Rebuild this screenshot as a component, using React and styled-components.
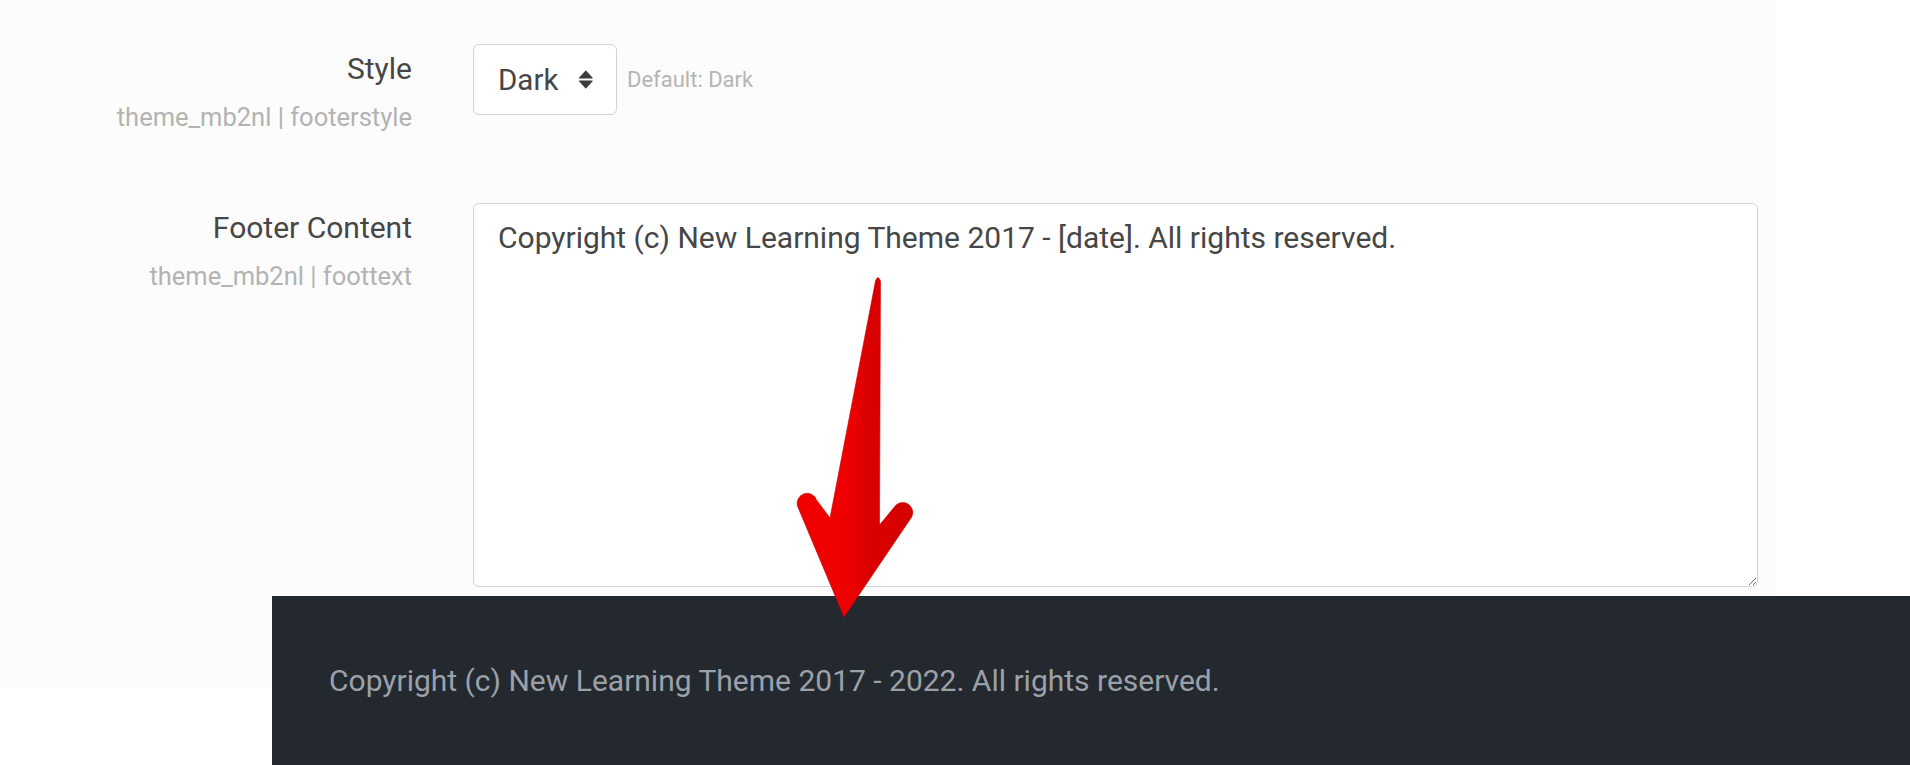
import React from "react";
import styled, { createGlobalStyle } from "styled-components";

const GlobalStyle = createGlobalStyle`
  html, body {
    margin: 0;
    padding: 0;
    background: #ffffff;
  }
  body {
    font-family: Roboto, "Noto Sans", "Liberation Sans", sans-serif;
  }
  * { box-sizing: border-box; }
`;

const Page = styled.div`
  position: relative;
  width: 1910px;
  height: 765px;
  overflow: hidden;
  background: #ffffff;
`;

const Top = styled.div`
  display: flex;
`;

const Panel = styled.section`
  width: 1776px;
  height: 596px;
  background: #fcfcfc;
  padding-top: 44px;
  display: flex;
  flex-direction: column;
  gap: 71px;
`;

const SettingRow = styled.div`
  display: grid;
  grid-template-columns: 412px 1fr;
  column-gap: 61px;
  align-items: start;
`;

const LabelCol = styled.div`
  text-align: right;
  padding-top: 8px;
`;

const Label = styled.div`
  font-size: 30px;
  line-height: 34px;
  color: #464646;
`;

const SubLabel = styled.div`
  margin-top: 16px;
  font-size: 25.5px;
  line-height: 30px;
  color: #b3b3b3;
`;

const ControlCol = styled.div`
  display: flex;
  align-items: center;
`;

const SelectBox = styled.div`
  display: flex;
  align-items: center;
  gap: 20px;
  height: 71px;
  width: 144px;
  padding: 0 22px 0 24px;
  border: 1px solid #d3d3d3;
  border-radius: 6px;
  background: #ffffff;
  font-size: 29.5px;
  line-height: 34px;
  color: #464646;
`;

const DefaultNote = styled.span`
  margin-left: 10px;
  font-size: 22px;
  line-height: 26px;
  color: #b5b5b5;
`;

const TextArea = styled.textarea`
  display: block;
  width: 1285px;
  height: 384px;
  margin: 0;
  padding: 11px 24px 9px;
  border: 1px solid #d3d3d3;
  border-radius: 6px;
  background: #ffffff;
  font-family: Roboto, "Noto Sans", "Liberation Sans", sans-serif;
  font-size: 30px;
  line-height: 1.5;
  color: #464646;
  resize: both;
  outline: none;
`;

const Bottom = styled.div`
  display: flex;
  align-items: flex-start;
`;

const Strip = styled.div`
  width: 272px;
  height: 92px;
  background: #fcfcfc;
`;

const Footer = styled.footer`
  flex: 1;
  height: 169px;
  background: #242930;
  display: flex;
  align-items: center;
  padding-left: 57px;
  font-size: 30px;
  line-height: 34px;
  color: #9ba1a9;
`;

const ArrowLayer = styled.svg`
  position: absolute;
  left: 790px;
  top: 270px;
  width: 130px;
  height: 360px;
  pointer-events: none;
`;

const SortIcon = () => (
  <svg width="16" height="19" viewBox="0 0 16 19" aria-hidden="true">
    <path d="M1.5 8 L8 1 L14.5 8 Z" fill="#3c3c3c" stroke="#3c3c3c" strokeWidth="1.2" strokeLinejoin="round" />
    <path d="M1.5 11 L14.5 11 L8 18 Z" fill="#3c3c3c" stroke="#3c3c3c" strokeWidth="1.2" strokeLinejoin="round" />
  </svg>
);

const RedArrow = () => (
  <ArrowLayer viewBox="0 0 130 360" aria-hidden="true">
    <defs>
      <linearGradient id="arrowFill" x1="0" y1="0" x2="1" y2="0">
        <stop offset="0%" stopColor="#f20000" />
        <stop offset="45%" stopColor="#ef0000" />
        <stop offset="60%" stopColor="#dc0000" />
        <stop offset="100%" stopColor="#d40000" />
      </linearGradient>
    </defs>
    <path
      d="M85.5 11 Q88 4 90.5 11 L89.5 255 L104.3 237.1 A10 10 0 0 1 121.7 246.9 L54 347 L7.5 236.1 A10 10 0 0 1 26.5 229.9 L40 248 Z"
      fill="url(#arrowFill)"
      stroke="#c80000"
      strokeWidth="0.6"
      strokeLinejoin="round"
    />
  </ArrowLayer>
);

export default function App() {
  return (
    <Page>
      <GlobalStyle />
      <Top>
        <Panel>
          <SettingRow>
            <LabelCol>
              <Label>Style</Label>
              <SubLabel>theme_mb2nl | footerstyle</SubLabel>
            </LabelCol>
            <ControlCol>
              <SelectBox>
                <span>Dark</span>
                <SortIcon />
              </SelectBox>
              <DefaultNote>Default: Dark</DefaultNote>
            </ControlCol>
          </SettingRow>
          <SettingRow>
            <LabelCol>
              <Label>Footer Content</Label>
              <SubLabel>theme_mb2nl | foottext</SubLabel>
            </LabelCol>
            <div>
              <TextArea
                readOnly
                defaultValue="Copyright (c) New Learning Theme 2017 - [date]. All rights reserved."
              />
            </div>
          </SettingRow>
        </Panel>
      </Top>
      <Bottom>
        <Strip />
        <Footer>Copyright (c) New Learning Theme 2017 - 2022. All rights reserved.</Footer>
      </Bottom>
      <RedArrow />
    </Page>
  );
}
